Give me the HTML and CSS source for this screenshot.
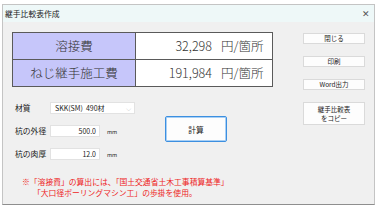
FILE: index.html
```html
<!DOCTYPE html>
<html lang="ja">
<head>
<meta charset="utf-8">
<title>継手比較表作成</title>
<link rel="stylesheet" href="styles.css">
</head>
<body>
<div class="window">
  <div class="titlebar">
    <span class="title">継手比較表作成</span>
    <span class="close">✕</span>
  </div>
  <div class="content">
    <div class="left">
      <table class="cost">
        <tr>
          <td class="label">溶接費</td>
          <td class="val"><span class="num">32,298</span><span class="unit">円/箇所</span></td>
        </tr>
        <tr>
          <td class="label">ねじ継手施工費</td>
          <td class="val"><span class="num">191,984</span><span class="unit">円/箇所</span></td>
        </tr>
      </table>
      <div class="form">
        <div class="fields">
          <div class="row">
            <span class="lbl">材質</span>
            <div class="select"><span>SKK(SM)&nbsp;&nbsp;490材</span><span class="chev">⌵</span></div>
          </div>
          <div class="row">
            <span class="lbl">杭の外径</span>
            <div class="input">500.0</div>
            <span class="mm">mm</span>
          </div>
          <div class="row">
            <span class="lbl">杭の肉厚</span>
            <div class="input">12.0</div>
            <span class="mm">mm</span>
          </div>
        </div>
        <button class="calc">計算</button>
      </div>
      <div class="note">
        <div>※「溶接費」の算出には、「国土交通省土木工事積算基準」</div>
        <div class="indent">「大口径ボーリングマシン工」の歩掛を使用。</div>
      </div>
    </div>
    <div class="right">
      <button class="btn">閉じる</button>
      <button class="btn">印刷</button>
      <button class="btn">Word出力</button>
      <button class="btn tall"><span class="ln">継手比較表</span><span class="ln">をコピー</span></button>
    </div>
  </div>
</div>
</body>
</html>
```

FILE: styles.css
```css
* { box-sizing: border-box; }
body {
  margin: 0;
  background: #ffffff;
  font-family: "Noto Sans CJK JP", "Noto Sans", sans-serif;
  color: #1a1a1a;
}
.window {
  margin: 4px 0 0 2px;
  width: 373px;
  height: 201px;
  border: 1px solid #c4c4c4;
  border-bottom-color: #8e8e8e;
  background: #f0f0f0;
  display: flex;
  flex-direction: column;
}
.titlebar {
  height: 17px;
  background: #eef8f8;
  display: flex;
  align-items: center;
  justify-content: space-between;
  padding: 0 4px 0 2px;
}
.title { font-size: 7.8px; line-height: 1; color: #222; }
.close { font-size: 9px; line-height: 1; color: #555; }
.content {
  flex: 1;
  display: flex;
  gap: 30px;
  padding: 10px 0 0 9px;
}
.left { width: 261px; display: flex; flex-direction: column; }
.cost {
  width: 261px;
  border-collapse: collapse;
  border: 1px solid #5a5a5a;
}
.cost td {
  border: 1px solid #5a5a5a;
  height: 27px;
  padding: 0;
  font-size: 12.5px;
  line-height: 1;
  white-space: nowrap;
  font-weight: 300;
}
.cost .label {
  width: 123px;
  background: #c6c6fa;
  text-align: center;
  color: #333;
}
.cost .val { background: #ffffff; color: #333; }
.num { display: inline-block; width: 76px; text-align: right; }
.unit { margin-left: 9px; }
.form { display: flex; margin-top: 15px; }
.fields {
  width: 153px;
  display: flex;
  flex-direction: column;
  gap: 11px;
  padding-left: 3px;
}
.row { display: flex; align-items: center; height: 12px; }
.lbl { width: 35px; font-size: 7.8px; line-height: 1; }
.select {
  width: 85px;
  height: 12px;
  background: #ffffff;
  border: 1px solid #e2e2e2;
  display: flex;
  align-items: center;
  justify-content: space-between;
  padding: 0 3px 0 4px;
  font-size: 7px;
  line-height: 1;
}
.chev { color: #999; font-size: 7px; }
.input {
  width: 50px;
  height: 12px;
  background: #ffffff;
  border: 1px solid #e2e2e2;
  text-align: right;
  padding-right: 3px;
  font-size: 7px;
  line-height: 10px;
}
.mm { font-size: 5.5px; margin-left: 7px; margin-top: 4px; line-height: 1; }
.calc {
  margin-top: 14px;
  width: 62px;
  height: 26px;
  background: #fdfdfd;
  border: 1px solid #3c8fe0;
  box-shadow: inset 0 0 0 1px #a9d0f5;
  border-radius: 2px;
  font-family: inherit;
  font-size: 7.8px;
  color: #1a1a1a;
  padding: 0;
}
.note {
  margin-top: 16px;
  padding-left: 10px;
  color: #ee2424;
  font-size: 7.8px;
  line-height: 11px;
  white-space: nowrap;
}
.note .indent { padding-left: 11px; }
.right {
  width: 62px;
  display: flex;
  flex-direction: column;
  gap: 12px;
  padding-top: 1px;
}
.btn {
  height: 11px;
  background: #fdfdfd;
  border: 1px solid #dadada;
  font-family: inherit;
  font-size: 6.5px;
  line-height: 1;
  color: #1a1a1a;
  padding: 0;
  display: flex;
  align-items: center;
  justify-content: center;
}
.btn.tall {
  height: 23px;
  flex-direction: column;
}
.btn .ln { display: block; line-height: 9px; height: 9px; }
```
